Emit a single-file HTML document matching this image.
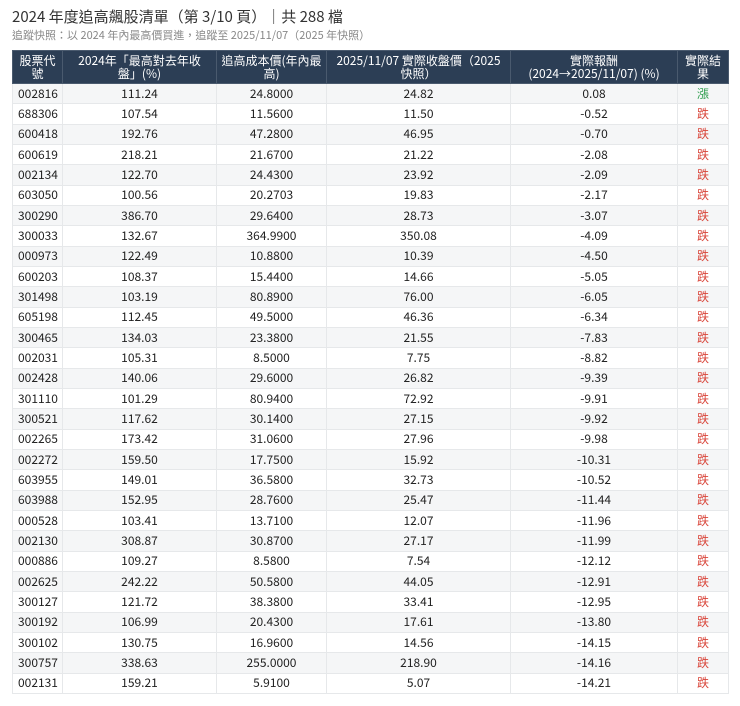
<!DOCTYPE html>
<html><head><meta charset="utf-8"><style>
body{margin:0;background:#fff;font-family:"Noto Sans CJK TC","Liberation Sans",sans-serif;color:#222}
.t{position:absolute;left:12px;top:7px;font-size:15px;line-height:20px;color:#333}
.s{position:absolute;left:12px;top:28px;font-size:11px;line-height:15px;color:#888}
table{position:absolute;left:12px;top:50px;border-collapse:collapse;width:716px;font-size:12px;table-layout:fixed}
th{background:#2c3e55;color:#fff;font-weight:normal;line-height:13px;height:33px;padding:0 2px;border:1px solid #4a5a6e;box-sizing:border-box;white-space:nowrap}
td{height:20.33px;padding:0 5px;text-align:center;border:1px solid #e6e8ea;box-sizing:border-box;line-height:18px}
td:first-child{text-align:left}
tr:nth-child(odd) td{background:#f5f6f7}
.u{color:#2e9e4e}.d{color:#d9453a}
</style></head><body>
<div class="t">2024 年度追高飆股清單（第 3/10 頁）｜共 288 檔</div>
<div class="s">追蹤快照：以 2024 年內最高價買進，追蹤至 2025/11/07（2025 年快照）</div>
<table>
<colgroup><col style="width:50px"><col style="width:154px"><col style="width:110px"><col style="width:184px"><col style="width:167px"><col style="width:51px"></colgroup>
<thead><tr><th>股票代<br>號</th><th>2024年「最高對去年收<br>盤」(%)</th><th>追高成本價(年內最<br>高)</th><th>2025/11/07 實際收盤價（2025<br>快照）</th><th>實際報酬<br>(2024→2025/11/07) (%)</th><th>實際結<br>果</th></tr></thead>
<tbody>
<tr><td>002816</td><td>111.24</td><td>24.8000</td><td>24.82</td><td>0.08</td><td class="u">漲</td></tr>
<tr><td>688306</td><td>107.54</td><td>11.5600</td><td>11.50</td><td>-0.52</td><td class="d">跌</td></tr>
<tr><td>600418</td><td>192.76</td><td>47.2800</td><td>46.95</td><td>-0.70</td><td class="d">跌</td></tr>
<tr><td>600619</td><td>218.21</td><td>21.6700</td><td>21.22</td><td>-2.08</td><td class="d">跌</td></tr>
<tr><td>002134</td><td>122.70</td><td>24.4300</td><td>23.92</td><td>-2.09</td><td class="d">跌</td></tr>
<tr><td>603050</td><td>100.56</td><td>20.2703</td><td>19.83</td><td>-2.17</td><td class="d">跌</td></tr>
<tr><td>300290</td><td>386.70</td><td>29.6400</td><td>28.73</td><td>-3.07</td><td class="d">跌</td></tr>
<tr><td>300033</td><td>132.67</td><td>364.9900</td><td>350.08</td><td>-4.09</td><td class="d">跌</td></tr>
<tr><td>000973</td><td>122.49</td><td>10.8800</td><td>10.39</td><td>-4.50</td><td class="d">跌</td></tr>
<tr><td>600203</td><td>108.37</td><td>15.4400</td><td>14.66</td><td>-5.05</td><td class="d">跌</td></tr>
<tr><td>301498</td><td>103.19</td><td>80.8900</td><td>76.00</td><td>-6.05</td><td class="d">跌</td></tr>
<tr><td>605198</td><td>112.45</td><td>49.5000</td><td>46.36</td><td>-6.34</td><td class="d">跌</td></tr>
<tr><td>300465</td><td>134.03</td><td>23.3800</td><td>21.55</td><td>-7.83</td><td class="d">跌</td></tr>
<tr><td>002031</td><td>105.31</td><td>8.5000</td><td>7.75</td><td>-8.82</td><td class="d">跌</td></tr>
<tr><td>002428</td><td>140.06</td><td>29.6000</td><td>26.82</td><td>-9.39</td><td class="d">跌</td></tr>
<tr><td>301110</td><td>101.29</td><td>80.9400</td><td>72.92</td><td>-9.91</td><td class="d">跌</td></tr>
<tr><td>300521</td><td>117.62</td><td>30.1400</td><td>27.15</td><td>-9.92</td><td class="d">跌</td></tr>
<tr><td>002265</td><td>173.42</td><td>31.0600</td><td>27.96</td><td>-9.98</td><td class="d">跌</td></tr>
<tr><td>002272</td><td>159.50</td><td>17.7500</td><td>15.92</td><td>-10.31</td><td class="d">跌</td></tr>
<tr><td>603955</td><td>149.01</td><td>36.5800</td><td>32.73</td><td>-10.52</td><td class="d">跌</td></tr>
<tr><td>603988</td><td>152.95</td><td>28.7600</td><td>25.47</td><td>-11.44</td><td class="d">跌</td></tr>
<tr><td>000528</td><td>103.41</td><td>13.7100</td><td>12.07</td><td>-11.96</td><td class="d">跌</td></tr>
<tr><td>002130</td><td>308.87</td><td>30.8700</td><td>27.17</td><td>-11.99</td><td class="d">跌</td></tr>
<tr><td>000886</td><td>109.27</td><td>8.5800</td><td>7.54</td><td>-12.12</td><td class="d">跌</td></tr>
<tr><td>002625</td><td>242.22</td><td>50.5800</td><td>44.05</td><td>-12.91</td><td class="d">跌</td></tr>
<tr><td>300127</td><td>121.72</td><td>38.3800</td><td>33.41</td><td>-12.95</td><td class="d">跌</td></tr>
<tr><td>300192</td><td>106.99</td><td>20.4300</td><td>17.61</td><td>-13.80</td><td class="d">跌</td></tr>
<tr><td>300102</td><td>130.75</td><td>16.9600</td><td>14.56</td><td>-14.15</td><td class="d">跌</td></tr>
<tr><td>300757</td><td>338.63</td><td>255.0000</td><td>218.90</td><td>-14.16</td><td class="d">跌</td></tr>
<tr><td>002131</td><td>159.21</td><td>5.9100</td><td>5.07</td><td>-14.21</td><td class="d">跌</td></tr>
</tbody></table>
</body></html>
